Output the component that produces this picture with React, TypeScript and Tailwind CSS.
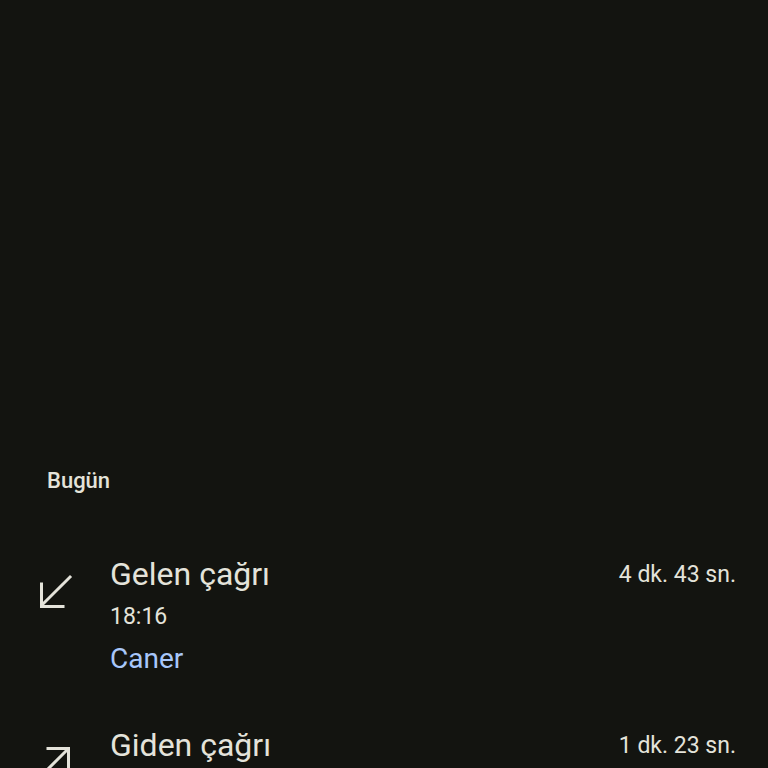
type Call = {
  id: number;
  kind: 'in' | 'out';
  title: string;
  time: string;
  contact: string;
  duration: string;
};

const calls: Call[] = [
  { id: 1, kind: 'in', title: 'Gelen çağrı', time: '18:16', contact: 'Caner', duration: '4 dk. 43 sn.' },
  { id: 2, kind: 'out', title: 'Giden çağrı', time: '17:02', contact: 'Caner', duration: '1 dk. 23 sn.' },
];

function CallIcon({ kind }: { kind: Call['kind'] }) {
  return (
    <svg width="40" height="40" viewBox="0 0 40 40" fill="none" stroke="currentColor" strokeWidth="3" strokeLinecap="square" strokeLinejoin="miter">
      {kind === 'in' ? (
        <>
          <path d="M34 7 L6 35" />
          <path d="M5.5 14 V36.5 H27" />
        </>
      ) : (
        <>
          <path d="M32 8 L4 36" />
          <path d="M12 7.5 H32.5 V28" />
        </>
      )}
    </svg>
  );
}

export default function App() {
  return (
    <div className="h-screen w-full overflow-hidden bg-[#131410] text-[#e4e3da]" style={{ fontFamily: 'Roboto, "Noto Sans", sans-serif' }}>
      <div className="pt-[467px]">
        <h2 className="pl-[47px] text-[22px] font-medium leading-[28px]">Bugün</h2>
        <ul className="mt-[59px] space-y-[47px]">
          {calls.map((call) => (
            <li key={call.id} className="flex items-start pr-[32px]">
              <div className="w-[110px] shrink-0 pl-[36px] pt-[16px]">
                <CallIcon kind={call.kind} />
              </div>
              <div className="flex min-w-0 flex-1 flex-col">
                <p className="text-[32px] leading-[40px]">{call.title}</p>
                <p className="text-[23px] leading-[46px]">{call.time}</p>
                <p className="text-[28px] leading-[38px] text-[#a8c7fa]">{call.contact}</p>
              </div>
              <p className="pt-[7px] text-[23px] leading-[28px]">{call.duration}</p>
            </li>
          ))}
        </ul>
      </div>
    </div>
  );
}
